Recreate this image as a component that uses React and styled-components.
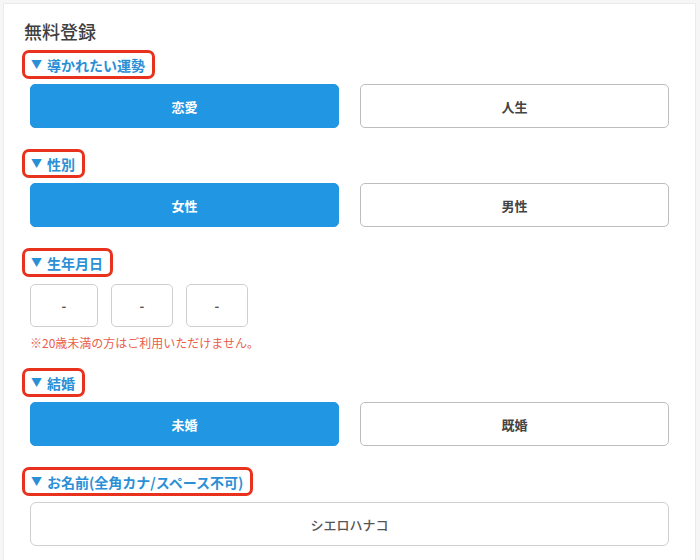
import styled, { createGlobalStyle } from "styled-components";

const GlobalStyle = createGlobalStyle`
  html, body {
    margin: 0;
    padding: 0;
    background: #f6f6f6;
    font-family: "Noto Sans CJK JP", "Noto Sans", sans-serif;
  }
  * { box-sizing: border-box; }
`;

const Card = styled.div`
  margin: 3px 4px 0 3px;
  min-height: 600px;
  background: #fff;
  border: 1px solid #ebebeb;
  border-bottom: none;
  padding: 15px 26px 40px 26px;
`;

const Title = styled.h2`
  margin: 0 0 7px -6px;
  font-size: 18px;
  line-height: 24px;
  font-weight: 500;
  color: #3f3f3f;
`;

const Section = styled.section`
  margin-top: ${(p) => p.$top ?? 21}px;
`;

const Label = styled.div`
  display: inline-flex;
  align-items: center;
  gap: 5px;
  height: 29px;
  margin-left: -8px;
  padding: 0 7px 0 6px;
  border: 3px solid #e8321e;
  border-radius: 7px;
  color: #2b8fd6;
  font-size: 14px;
  font-weight: 700;
`;

const Arrow = styled.span`
  font-size: 11px;
  line-height: 1;
`;

const Row = styled.div`
  margin-top: 5px;
  display: grid;
  grid-template-columns: 1fr 1fr;
  gap: 21px;
`;

const Choice = styled.button`
  height: 44px;
  border-radius: 5px;
  border: 1px solid ${(p) => (p.$active ? "#2196e3" : "#bdbdbd")};
  background: ${(p) => (p.$active ? "#2196e3" : "#fff")};
  color: ${(p) => (p.$active ? "#fff" : "#444")};
  font-family: inherit;
  font-size: 13px;
  font-weight: 700;
  cursor: pointer;
`;

const DateRow = styled.div`
  margin-top: 7px;
  display: flex;
  gap: 13px;
`;

const DateBox = styled.div`
  width: ${(p) => p.$w}px;
  height: 43px;
  border: 1px solid #cfcfcf;
  border-radius: 5px;
  display: flex;
  align-items: center;
  justify-content: center;
  color: #555;
  font-size: 13px;
  font-weight: 700;
`;

const Note = styled.p`
  margin: 7px 0 0 0;
  font-size: 12px;
  line-height: 17px;
  color: #e8604c;
`;

const NameInput = styled.div`
  margin-top: 6px;
  height: 44px;
  border: 1px solid #cfcfcf;
  border-radius: 6px;
  display: flex;
  align-items: center;
  justify-content: center;
  color: #555;
  font-size: 13px;
  font-weight: 500;
`;

const SectionLabel = ({ children }) => (
  <Label>
    <Arrow>▼</Arrow>
    {children}
  </Label>
);

const ChoiceRow = ({ options, active }) => (
  <Row>
    {options.map((o) => (
      <Choice key={o} type="button" $active={o === active}>
        {o}
      </Choice>
    ))}
  </Row>
);

export default function App() {
  return (
    <>
      <GlobalStyle />
      <Card>
        <Title>無料登録</Title>

        <Section $top={0}>
          <SectionLabel>導かれたい運勢</SectionLabel>
          <ChoiceRow options={["恋愛", "人生"]} active="恋愛" />
        </Section>

        <Section>
          <SectionLabel>性別</SectionLabel>
          <ChoiceRow options={["女性", "男性"]} active="女性" />
        </Section>

        <Section>
          <SectionLabel>生年月日</SectionLabel>
          <DateRow>
            <DateBox $w={68}>-</DateBox>
            <DateBox $w={62}>-</DateBox>
            <DateBox $w={62}>-</DateBox>
          </DateRow>
          <Note>※20歳未満の方はご利用いただけません。</Note>
        </Section>

        <Section $top={17}>
          <SectionLabel>結婚</SectionLabel>
          <ChoiceRow options={["未婚", "既婚"]} active="未婚" />
        </Section>

        <Section>
          <SectionLabel>お名前(全角カナ/スペース不可)</SectionLabel>
          <NameInput>シエロハナコ</NameInput>
        </Section>
      </Card>
    </>
  );
}
